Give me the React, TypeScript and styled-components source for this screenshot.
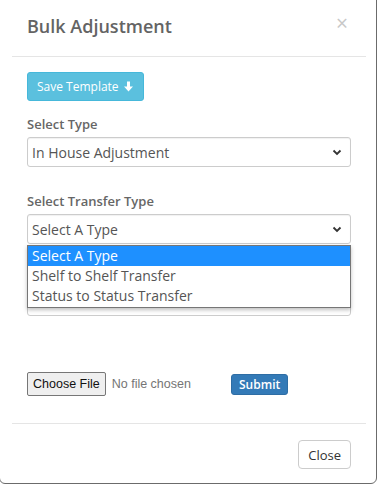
import React from 'react';
import styled, { createGlobalStyle } from 'styled-components';

const Global = createGlobalStyle`
  html, body {
    margin: 0;
    padding: 0;
    background: #ffffff;
    overflow: hidden;
  }
  body {
    font-family: 'Open Sans', 'Liberation Sans', sans-serif;
    color: #555;
  }
`;

const Modal = styled.div`
  position: relative;
  margin: -10px 0 0 -1px;
  width: 378px;
  height: 494px;
  box-sizing: border-box;
  background: #fff;
  border: 1px solid #6b6b6b;
  border-radius: 6px;
  display: flex;
  flex-direction: column;
`;

const Header = styled.div`
  margin: 0 10px 0 12px;
  padding: 22px 15px 17px;
  border-bottom: 1px solid #e5e5e5;
  display: flex;
  align-items: flex-start;
  justify-content: space-between;
`;

const Title = styled.h4`
  margin: 0;
  font-size: 18px;
  line-height: 26px;
  font-weight: 600;
  color: #646464;
`;

const CloseX = styled.span`
  font-size: 21px;
  line-height: 21px;
  font-weight: 400;
  color: #c8c8c8;
  margin: 0 3px 0 0;
`;

const Body = styled.div`
  margin: 0 10px 0 12px;
  padding: 15px 15px 27px;
  border-bottom: 1px solid #e5e5e5;
`;

const Button = styled.button<{ $tone: 'info' | 'primary' | 'default' }>`
  font-family: 'Open Sans', 'Liberation Sans', sans-serif;
  display: inline-flex;
  align-items: center;
  gap: 4px;
  border-radius: 3px;
  cursor: pointer;
  box-sizing: border-box;
  ${p =>
    p.$tone === 'info'
      ? `background:#5bc0de;border:1px solid #46b8da;color:#fff;font-size:12px;height:29px;padding:0 9px;font-weight:400;`
      : p.$tone === 'primary'
      ? `background:#337ab7;border:1px solid #2e6da4;color:#fff;font-size:12px;height:21px;padding:0 7px;font-weight:600;`
      : `background:#fff;border:1px solid #ccc;color:#333;font-size:13px;height:29px;padding:0 9px;border-radius:4px;`}
`;

const Group = styled.div<{ $gap?: number }>`
  margin-top: ${p => p.$gap ?? 0}px;
  position: relative;
`;

const Label = styled.div`
  font-size: 13px;
  line-height: 18px;
  font-weight: 600;
  color: #666;
  margin-bottom: 4px;
`;

const SelectBox = styled.div`
  height: 30px;
  box-sizing: border-box;
  border: 1px solid #ccc;
  border-radius: 3px;
  box-shadow: inset 0 1px 1px rgba(0, 0, 0, 0.06);
  display: flex;
  align-items: center;
  justify-content: space-between;
  padding: 0 8px 0 4px;
  font-size: 14px;
  color: #555;
`;

const Menu = styled.div`
  position: absolute;
  left: 0;
  right: 0;
  top: calc(100% + 1px);
  background: #fff;
  border: 1px solid #767676;
  box-shadow: 0 2px 4px rgba(0, 0, 0, 0.25);
  z-index: 5;
  padding: 0 0 1px;
`;

const MenuItem = styled.div<{ $active?: boolean }>`
  height: 20px;
  line-height: 20px;
  padding-left: 4px;
  font-size: 14px;
  background: ${p => (p.$active ? '#1e90ff' : 'transparent')};
  color: ${p => (p.$active ? '#fff' : '#555')};
`;

const Spacer = styled.div`
  height: 18px;
  margin-bottom: 4px;
`;

const FileRow = styled.div`
  margin-top: 56px;
  display: flex;
  align-items: center;
`;

const FileInput = styled.div`
  width: 204px;
  display: flex;
  align-items: center;
  gap: 6px;
  font-family: 'Liberation Sans', Arial, sans-serif;
  font-size: 12.5px;
  color: #757575;
`;

const FileButton = styled.span`
  display: inline-block;
  height: 24px;
  line-height: 22px;
  box-sizing: border-box;
  padding: 0 5px;
  background: #efefef;
  border: 1px solid #767676;
  border-radius: 2px;
  color: #111;
`;

const Footer = styled.div`
  padding: 16px 25px 13px;
  display: flex;
  justify-content: flex-end;
`;

const Chevron = () => (
  <svg width="10" height="7" viewBox="0 0 10 7">
    <path d="M1.5 1.5 L5 5 L8.5 1.5" fill="none" stroke="#333" strokeWidth="1.8" />
  </svg>
);

const ArrowDown = () => (
  <svg width="11" height="11" viewBox="0 0 11 11">
    <path d="M4 0.5h3v5h3L5.5 10.5 1 5.5h3z" fill="#fff" />
  </svg>
);

const Select: React.FC<{ value: string; children?: React.ReactNode }> = ({ value, children }) => (
  <Group>
    <SelectBox>
      <span>{value}</span>
      <Chevron />
    </SelectBox>
    {children}
  </Group>
);

export default function App() {
  return (
    <>
      <Global />
      <Modal>
        <Header>
          <Title>Bulk Adjustment</Title>
          <CloseX>×</CloseX>
        </Header>
        <Body>
          <Button $tone="info">
            Save Template <ArrowDown />
          </Button>
          <Group $gap={14}>
            <Label>Select Type</Label>
            <Select value="In House Adjustment" />
          </Group>
          <Group $gap={25}>
            <Label>Select Transfer Type</Label>
            <Select value="Select A Type">
              <Menu>
                <MenuItem $active>Select A Type</MenuItem>
                <MenuItem>Shelf to Shelf Transfer</MenuItem>
                <MenuItem>Status to Status Transfer</MenuItem>
              </Menu>
            </Select>
          </Group>
          <Group $gap={20}>
            <Spacer />
            <Select value="" />
          </Group>
          <FileRow>
            <FileInput>
              <FileButton>Choose File</FileButton>
              No file chosen
            </FileInput>
            <Button $tone="primary">Submit</Button>
          </FileRow>
        </Body>
        <Footer>
          <Button $tone="default">Close</Button>
        </Footer>
      </Modal>
    </>
  );
}
